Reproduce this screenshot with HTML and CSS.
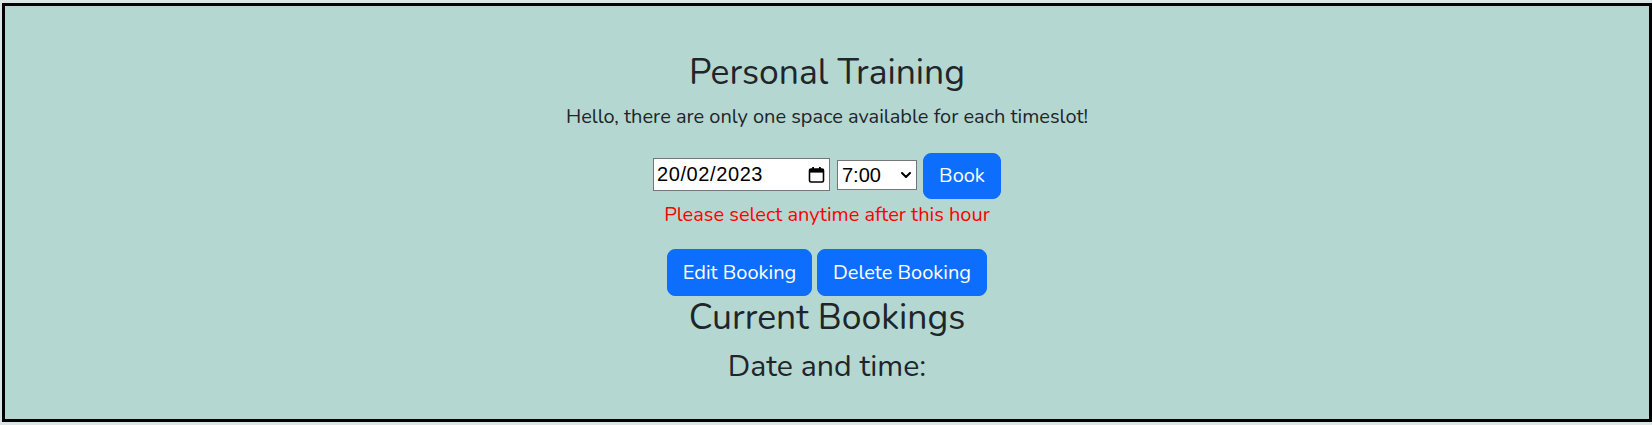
FILE: index.html
```html
<!DOCTYPE html>
<html lang="en">
<head>
<meta charset="utf-8">
<title>Personal Training</title>
<link rel="stylesheet" href="styles.css">
</head>
<body>
<div class="page">
  <h2 class="title">Personal Training</h2>
  <p class="lead">Hello, there are only one space available for each timeslot!</p>
  <form class="book-row">
    <div class="date-field">
      <span class="date-text">20/02/2023</span>
      <svg class="cal-icon" viewBox="0 0 17 17" width="17" height="17" aria-hidden="true">
        <rect x="1.5" y="3" width="14" height="13" rx="1.5" fill="none" stroke="#000" stroke-width="1.6"/>
        <rect x="1" y="3" width="15" height="3.6" fill="#000"/>
        <rect x="4.2" y="1" width="1.8" height="3" fill="#000"/>
        <rect x="11" y="1" width="1.8" height="3" fill="#000"/>
      </svg>
    </div>
    <div class="select-wrap">
      <select class="time-select">
        <option>7:00</option>
        <option>8:00</option>
        <option>9:00</option>
      </select>
      <svg class="chev" viewBox="0 0 10 6" width="10" height="6" aria-hidden="true">
        <path d="M1 1 L5 5 L9 1" fill="none" stroke="#000" stroke-width="2" stroke-linecap="round" stroke-linejoin="round"/>
      </svg>
    </div>
    <button type="button" class="btn btn-book">Book</button>
  </form>
  <p class="error">Please select anytime after this hour</p>
  <div class="action-row">
    <button type="button" class="btn btn-edit">Edit Booking</button>
    <button type="button" class="btn btn-delete">Delete Booking</button>
  </div>
  <h2 class="title current">Current Bookings</h2>
  <h3 class="subhead">Date and time:</h3>
</div>
</body>
</html>
```

FILE: styles.css
```css
html, body {
  margin: 0;
  padding: 0;
}
body {
  background: #dce5e5;
  font-family: "Nunito", Lato, "Noto Sans", sans-serif;
  color: #212529;
}
.page {
  margin: 3px 0 3px 2px;
  border: 3px solid #000;
  background: #b4d8d1;
  text-align: center;
  padding: 46px 0 0 0;
  box-sizing: border-box;
  height: 419px;
  overflow: hidden;
}
.title {
  font-size: 35.5px;
  font-weight: 400;
  line-height: 42px;
  margin: 0;
}
.lead {
  font-size: 20px;
  line-height: 30px;
  margin: 8px 0 0 0;
}
.book-row {
  display: flex;
  justify-content: center;
  align-items: center;
  margin: 21px 0 0 0;
  height: 46px;
}
.date-field {
  box-sizing: border-box;
  width: 177px;
  height: 33px;
  border: 1px solid #767676;
  background: #fff;
  display: flex;
  align-items: center;
  justify-content: space-between;
  padding: 0 4px 0 3px;
  margin-right: 7px;
  margin-top: -3px;
}
.date-text {
  font-family: "Liberation Sans", Arial, sans-serif;
  font-size: 20px;
  color: #000;
  letter-spacing: 0.6px;
}
.cal-icon {
  display: block;
}
.select-wrap {
  position: relative;
  width: 80px;
  height: 30px;
  margin-right: 6px;
  margin-top: -3px;
}
.time-select {
  display: block;
  box-sizing: border-box;
  width: 80px;
  height: 30px;
  padding: 0 0 0 4px;
  font-family: "Liberation Sans", Arial, sans-serif;
  font-size: 20px;
  color: #000;
  background: #fff;
  border: 1px solid #767676;
  border-radius: 0;
  appearance: none;
  -webkit-appearance: none;
}
.chev {
  position: absolute;
  right: 6px;
  top: 12px;
  pointer-events: none;
}
.btn {
  font-family: inherit;
  font-size: 20px;
  line-height: 30px;
  color: #fff;
  background: #0d6efd;
  border: 1px solid #0d6efd;
  border-radius: 8px;
  padding: 7px 0;
  text-align: center;
  cursor: pointer;
}
.btn-book {
  width: 78px;
  height: 46px;
}
.error {
  color: #ff0000;
  font-size: 20px;
  line-height: 30px;
  margin: 1px 0 0 0;
}
.action-row {
  display: flex;
  justify-content: center;
  gap: 5px;
  margin-top: 19px;
}
.btn-edit {
  width: 145px;
  height: 47px;
}
.btn-delete {
  width: 170px;
  height: 47px;
}
.current {
  margin-top: 1px;
}
.subhead {
  font-size: 30.3px;
  font-weight: 400;
  line-height: 36px;
  margin: 9px 0 0 0;
}
```
